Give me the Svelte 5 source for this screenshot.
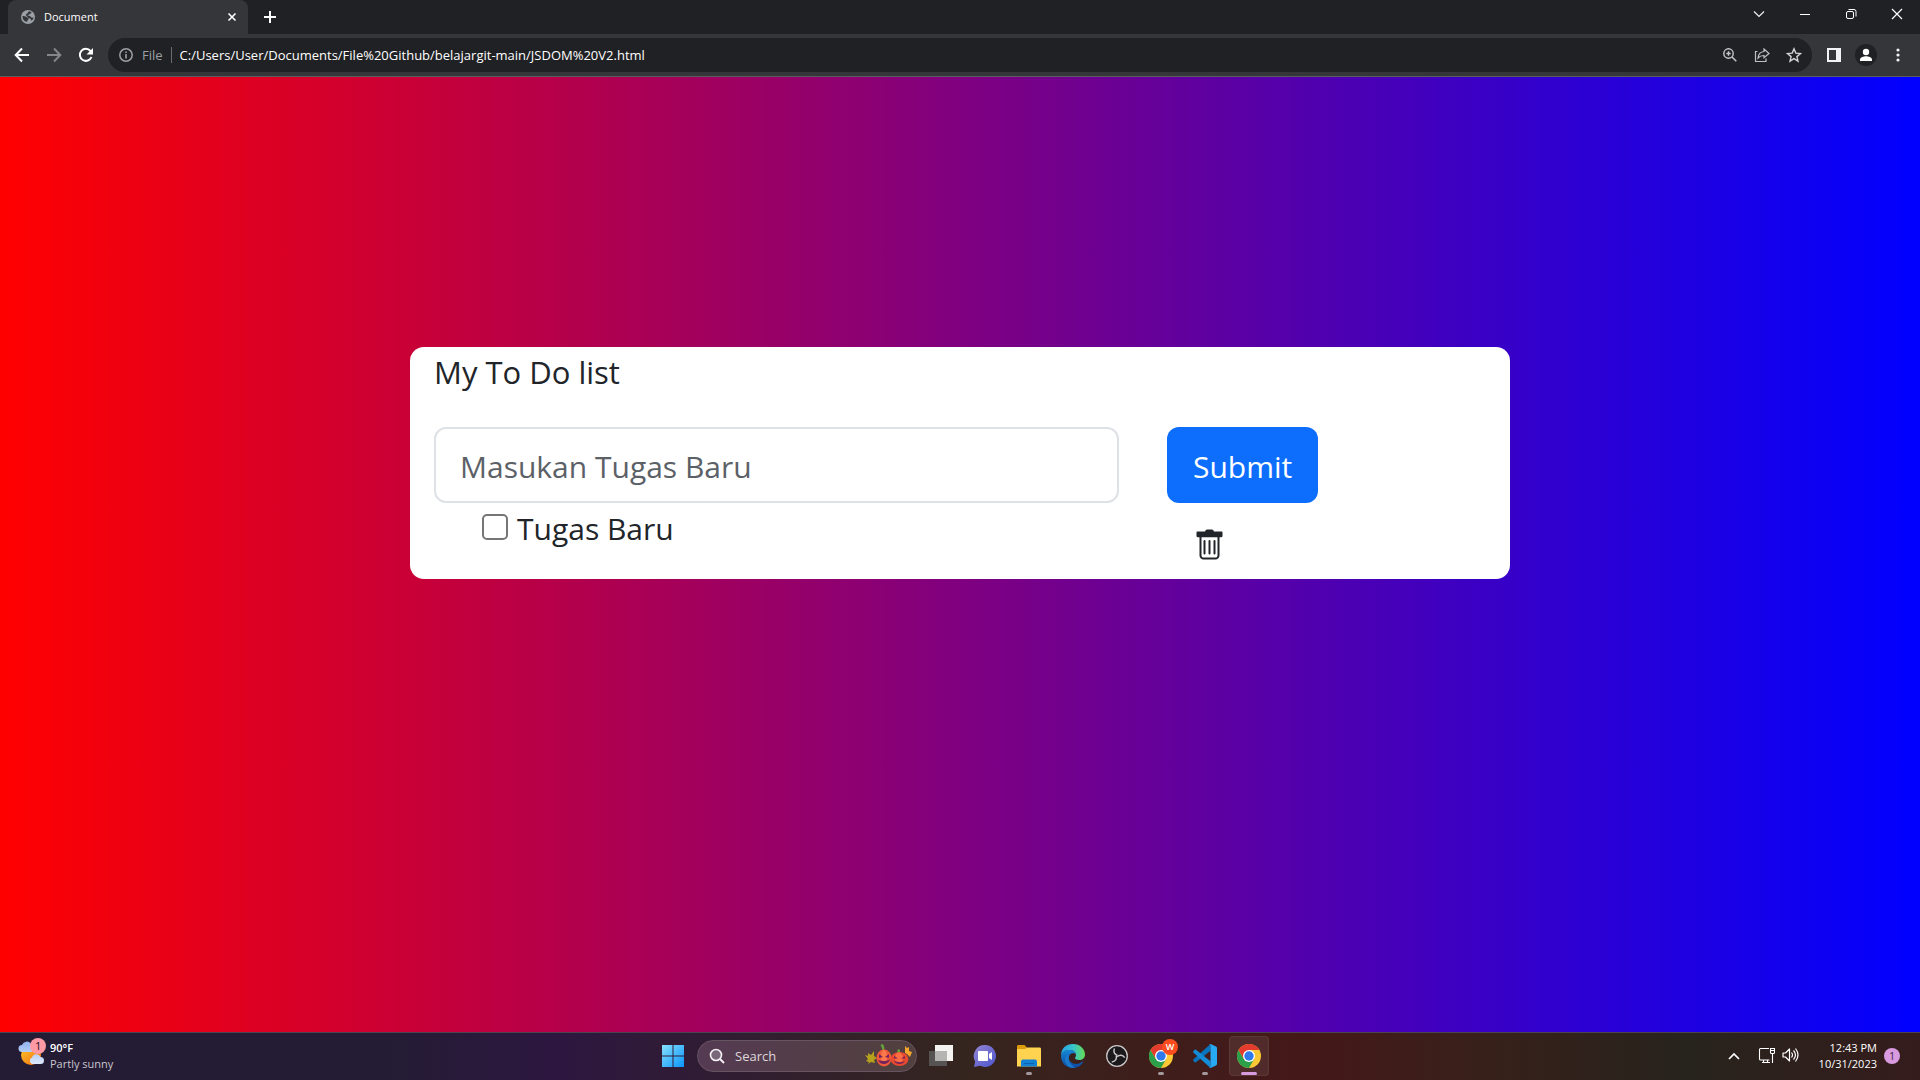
<script>
  let task = $state('');
  let done = $state(false);
</script>

<div class="screen">
  <header class="browser">
    <div class="tabs">
      <div class="tab">
        <svg class="globe" viewBox="0 0 14 14" width="14" height="14"><circle cx="7" cy="7" r="7" fill="#9aa0a6"/><path d="M1.500 6c1.500 0 3 .2 4 1 .3 1 2.200.2 2.200 1.500 0 1-1.500 1.200-1.500 3.200C3.500 12 1.400 9.500 1.500 6zM7.500 1.500c1.500-.2 2.500.3 3.200 1-.5 1.300-1.700.9-2.200 1.800-.4.800-1.500.2-1.900 1 .3.700 2 .3 2.700 1 .5.800 1.300 1.600 2.700 1.300l.5-.3c-.1 1.800-.9 2.700-1.900 3.500-.5-1-1-2-2-2.500-1.500-.5-2.500-1.500-3.600-3-.6-1.300 1-1.600 1.800-2.300z" fill="#35363a"/></svg>
        <span class="tabname">Document</span>
        <button class="icon small" aria-label="Close tab"><svg viewBox="0 0 10 10" width="10" height="10"><path d="M1.500 1.500l7 7m0-7l-7 7" stroke="#fff" stroke-width="1.600"/></svg></button>
      </div>
      <button class="icon plus" aria-label="New tab"><svg viewBox="0 0 12 12" width="12" height="12"><path d="M6 0v12M0 6h12" stroke="#fff" stroke-width="2"/></svg></button>
      <div class="window">
        <button class="icon" aria-label="Search tabs"><svg viewBox="0 0 12 12" width="12" height="12"><path d="M1 3.500l5 5 5-5" fill="none" stroke="#f0f1f2" stroke-width="1.200"/></svg></button>
        <button class="icon" aria-label="Minimize"><svg viewBox="0 0 12 12" width="12" height="12"><path d="M1 6.500h10" stroke="#fff"/></svg></button>
        <button class="icon" aria-label="Restore"><svg viewBox="0 0 12 12" width="12" height="12"><rect x="1.500" y="3.500" width="7" height="7" rx="1.500" fill="none" stroke="#fff"/><path d="M3.500 1.500h5.500a2 2 0 0 1 2 2v5" fill="none" stroke="#fff"/></svg></button>
        <button class="icon" aria-label="Close"><svg viewBox="0 0 12 12" width="12" height="12"><path d="M1 1l10 10m0-10L1 11" stroke="#fff" stroke-width="1.200"/></svg></button>
      </div>
    </div>
    <nav class="toolbar">
      <button class="icon nav" aria-label="Back"><svg viewBox="0 0 16 16" width="16" height="16"><path d="M15 8H2m6-6.500L1.700 8 8 14.500" fill="none" stroke="#fff" stroke-width="2"/></svg></button>
      <button class="icon nav" aria-label="Forward"><svg viewBox="0 0 16 16" width="16" height="16"><path d="M1 8h13M8 1.500L14.300 8 8 14.500" fill="none" stroke="#84868a" stroke-width="2"/></svg></button>
      <button class="icon nav" aria-label="Reload"><svg viewBox="0 0 16 16" width="16" height="16"><path d="M13.500 10A6 6 0 1 1 12.500 4l1 1" fill="none" stroke="#fff" stroke-width="2"/><path d="M15 1v6.500H8.500z" fill="#fff"/></svg></button>
      <div class="omnibox">
        <svg viewBox="0 0 14 14" width="14" height="14"><circle cx="7" cy="7" r="6.200" fill="none" stroke="#9aa0a6" stroke-width="1.500"/><path d="M7 6v4.500M7 3.500V5" stroke="#9aa0a6" stroke-width="1.600"/></svg>
        <span class="file">File</span>
        <input class="url" aria-label="Address" value="C:/Users/User/Documents/File%20Github/belajargit-main/JSDOM%20V2.html" />
        <button class="icon" aria-label="Zoom"><svg viewBox="0 0 14 14" width="14" height="14"><circle cx="5.500" cy="5.500" r="4.700" fill="none" stroke="#c4c7ca" stroke-width="1.400"/><path d="M9 9l4.300 4.300M5.500 3.300v4.400M3.300 5.500h4.400" stroke="#c4c7ca" stroke-width="1.500"/></svg></button>
        <button class="icon" aria-label="Share"><svg viewBox="0 0 16 16" width="16" height="16"><path d="M3.500 4.500h-2v10h10.500v-3" fill="none" stroke="#bdc1c6" stroke-width="1.200"/><path d="M10 2l5 4.500-5 4.300V8.500C7.500 8.500 5.500 9.200 4 11c.3-3.500 2.500-6.200 6-6.500z" fill="none" stroke="#bdc1c6" stroke-width="1.200"/></svg></button>
        <button class="icon" aria-label="Bookmark"><svg viewBox="0 0 16 16" width="16" height="16"><path d="M8 1.800l1.800 4.300 4.700.4-3.600 3.100 1.100 4.600L8 11.700l-4 2.500 1.100-4.600-3.600-3.100 4.700-.4z" fill="none" stroke="#d0d3d6" stroke-width="1.400"/></svg></button>
      </div>
      <div class="actions">
        <button class="icon" aria-label="Side panel"><svg viewBox="0 0 14 14" width="14" height="14"><path fill-rule="evenodd" d="M0 0h14v14H0zM2 2v10h7V2z" fill="#f1f3f4"/></svg></button>
        <button class="icon" aria-label="Profile"><svg viewBox="0 0 22 22" width="22" height="22"><circle cx="11" cy="11" r="11" fill="#202124"/><circle cx="11" cy="8" r="3.200" fill="#fff"/><path d="M5 17v-1.500c0-2.200 3.800-3.300 6-3.300s6 1.100 6 3.300V17z" fill="#fff"/></svg></button>
        <button class="icon more" aria-label="Menu"><svg viewBox="0 0 4 14" width="4" height="14"><circle cx="2" cy="2" r="1.600" fill="#f1f3f4"/><circle cx="2" cy="7" r="1.600" fill="#f1f3f4"/><circle cx="2" cy="12" r="1.600" fill="#f1f3f4"/></svg></button>
      </div>
    </nav>
  </header>

  <main class="page">
    <section class="card">
      <h1>My To Do list</h1>
      <form class="entry" onsubmit={(e) => e.preventDefault()}>
        <input class="task" aria-label="Masukan Tugas Baru" placeholder="Masukan Tugas Baru" bind:value={task} />
        <button class="submit">Submit</button>
      </form>
      <div class="item">
        <label><input type="checkbox" bind:checked={done} />Tugas Baru</label>
        <button class="icon trash" aria-label="Delete">
          <svg viewBox="0 0 27 31" width="27" height="31"><path d="M1.500 2.500H9c.5-1.600 1.500-2 2.500-2h4c1 0 2 .4 2.500 2h7.500c.700 0 1 .5 1 1v3.500c0 .7-.5 1.200-1.200 1.200H1.700C1 8.200.5 7.700.5 7V3.500c0-.5.3-1 1-1z" fill="#212529"/><path d="M4.500 8v18.500a3 3 0 0 0 3 3h12a3 3 0 0 0 3-3V8M8.500 12v12.500M13.500 12v12.500M18.500 12v12.500" fill="none" stroke="#212529" stroke-width="2" stroke-linecap="round"/></svg>
        </button>
      </div>
    </section>
  </main>

  <footer class="taskbar">
    <button class="weather">
      <svg viewBox="0 0 28 28" width="28" height="28"><defs><linearGradient id="sun" x2="1" y2="1"><stop stop-color="#ffc928"/><stop offset="1" stop-color="#f26b12"/></linearGradient><linearGradient id="cloud" x2="0" y2="1"><stop stop-color="#8fb3ef"/><stop offset="1" stop-color="#dce9fb"/></linearGradient></defs><circle cx="13" cy="17" r="10" fill="url(#sun)"/><path d="M4 14a3.500 3.500 0 0 1 0-7 5 5 0 0 1 9-1l1 8zM14 26a3.500 3.500 0 0 1 0-6.500 4.500 4.500 0 0 1 8.500-.5 3.500 3.500 0 0 1 0 7z" fill="url(#cloud)"/><circle cx="20" cy="8" r="8" fill="#ff99a4"/><text x="17" y="12" font-size="11" fill="#201020">1</text></svg>
      <span class="two"><strong>90°F</strong><span>Partly sunny</span></span>
    </button>
    <div class="apps">
      <button class="app" aria-label="Start"><svg viewBox="0 0 24 24" width="24" height="24"><defs><linearGradient id="win" x2="1" y2="1"><stop stop-color="#86e0ff"/><stop offset="1" stop-color="#0a94fa"/></linearGradient></defs><path d="M1 1h10.500v10.500H1zM12.500 1H23v10.500H12.500zM1 12.500h10.500V23H1zM12.500 12.500H23V23H12.500z" fill="url(#win)"/></svg></button>
      <button class="search">
        <svg viewBox="0 0 16 16" width="16" height="16"><circle cx="7" cy="7" r="5.500" fill="#79687a" stroke="#f4f0f4" stroke-width="1.600"/><path d="M11 11l4 4" stroke="#f4f0f4" stroke-width="2"/></svg>
        <span>Search</span>
        <svg viewBox="0 0 48 24" width="48" height="24"><path d="M1 11l3 1 0-3 3 2 3-4 0 5 3 2-3 2 1 3-4-1-3 2 1-2-3-1 2-2z" fill="#b5a21c"/><path d="M18.500 7c0-3-1-4-2-6l2-1c2 2 2 4 2 7zM33 9l1-4 2 1v4z" fill="#66a63a"/><ellipse cx="20" cy="14" rx="7.500" ry="8.500" fill="#ee5a3a"/><ellipse cx="20" cy="13" rx="3" ry="7" fill="#fb7a4c"/><ellipse cx="35.500" cy="15" rx="9" ry="7" fill="#e84a30"/><ellipse cx="35" cy="14" rx="4" ry="5.500" fill="#fb6d43"/><path d="M15 10l4 3-4 1zM25 10l-4 3 4 1zM14 16c4 1.500 9 1.500 12-1-1 6-10 7-12 1zM30 12l4 2.500h-4zM41 12l-4 2.500h4zM30 17c4 1.500 8 1.500 11 0-2 4-9 4-11 0z" fill="#75245c"/><path d="M41 2l2 2 2-1 0 4 3 1-2 5-3-3-2-1z" fill="#f6a72b"/></svg>
      </button>
      <button class="app" aria-label="Task view"><svg viewBox="0 0 24 24" width="24" height="24"><path d="M6 1h18v16H6z" fill="#f4f3f2"/><path d="M0 7h18v15H0z" fill="#555452"/><path d="M6 7h12v10H6z" fill="#b5b4b3"/></svg></button>
      <button class="app" aria-label="Chat"><svg viewBox="0 0 24 24" width="24" height="24"><defs><linearGradient id="chat" x2="1" y2="1"><stop stop-color="#9587d3"/><stop offset="1" stop-color="#4b53ce"/></linearGradient></defs><path d="M12 1a11 11 0 1 1-5 20.800L1 23l1.200-5.500A11 11 0 0 1 12 1z" fill="url(#chat)"/><rect x="5" y="7" width="10" height="10" rx="1" fill="#fff"/><path d="M16 10l3-2v8l-3-2z" fill="#fff"/></svg></button>
      <button class="app open" aria-label="File Explorer"><svg viewBox="0 0 24 24" width="24" height="24"><path d="M0 2.500C0 1.500.5 1 1.500 1h6L10 3.500V8H0z" fill="#dc9b0a"/><path d="M0 5h8l2-1.500h12.500c1 0 1.500.5 1.500 1.500v17.500H0z" fill="#ffd350"/><path d="M4 22.500V18c0-1.500.5-2.500 2-2.500h12c1.500 0 2 1 2 2.500v4.500z" fill="#1180d5"/><path d="M7 19.500h10" stroke="#0a62ae"/></svg></button>
      <button class="app" aria-label="Edge"><svg viewBox="0 0 24 24" width="24" height="24"><defs><linearGradient id="edgeTop" x2="1"><stop stop-color="#279fe0"/><stop offset=".5" stop-color="#36c5cf"/><stop offset="1" stop-color="#65db53"/></linearGradient><linearGradient id="edgeLow" x2="0" y2="1"><stop stop-color="#1688d8"/><stop offset="1" stop-color="#0c479e"/></linearGradient></defs><path d="M0 12C0 4 5 0 12 0s12 5 12 10.500c0 4-3 5.500-5.500 5.500-3 0-4.500-1-4.500-2s1-1 1-3c0-3-3-5-6.500-5C4 6 1 8.500 0 12z" fill="url(#edgeTop)"/><path d="M0 12c1-5 5-6 8-6 4 0 7 2 7 5 0-2-5-2.500-6.500 0-2.500 4.500 1.500 9 6.500 9 3 0 5-1.500 6.500-2.500.5 0 .7.300.4.700C20 21.500 16.500 24 12 24 5 24 0 19 0 12z" fill="url(#edgeLow)"/><path d="M8.500 11c-2.500 4.500 1 11 6 12.500C8 25 3 20 4 14.500 4.500 12 6.500 10.500 8.500 11z" fill="#1c78cb"/></svg></button>
      <button class="app" aria-label="OBS"><svg viewBox="0 0 24 24" width="24" height="24"><circle cx="12" cy="12" r="10.300" fill="#1b191b" stroke="#cbc8c9" stroke-width="1.300"/><g fill="none" stroke="#cbc8c9" stroke-width="1.500"><path d="M12.500 11.500C9.500 10.500 8 8 9.500 4.500"/><path d="M12.500 11.500C9.500 10.500 8 8 9.500 4.500" transform="rotate(120 12 12)"/><path d="M12.500 11.500C9.500 10.500 8 8 9.500 4.500" transform="rotate(240 12 12)"/></g></svg></button>
      {#each ['work', 'code', 'active'] as app}
        <button class="app open" class:active={app === 'active'} aria-label={app === 'code' ? 'Visual Studio Code' : 'Chrome'}>
          {#if app === 'code'}
            <svg viewBox="0 0 24 24" width="24" height="24"><path d="M17.500 0v6.800L3 18.300c-.5.300-1 .2-1.300-.1L.3 16.800c-.4-.4-.4-.9 0-1.300z" fill="#0874bd"/><path d="M17.500 24v-6.800L3 5.700c-.5-.3-1-.2-1.300.1L.3 7.200c-.4.400-.4.900 0 1.300z" fill="#148bd6"/><path d="M17.500 0L23 2.500c.7.300 1 .9 1 1.500v16c0 .6-.3 1.200-1 1.500L17.500 24c-.7 0-1-.4-1.500-1 .9.500 1.500 0 1.500-.8V1.800c0-.8-.6-1.300-1.500-.8.500-.6.800-1 1.500-1z" fill="#29a8f2"/></svg>
          {:else}
            <svg viewBox="0 0 24 24" width="24" height="24"><circle cx="12" cy="12" r="12" fill="#fcc934"/><path d="M1.600 6A12 12 0 0 0 12 24l5.200-9H6.800z" fill="#2b9f49"/><path d="M12 6h10.400A12 12 0 0 0 1.600 6l5.200 9z" fill="#e33b2e"/><circle cx="12" cy="12" r="6" fill="#fff"/><circle cx="12" cy="12" r="4.700" fill="#3079ec"/></svg>
          {/if}
          {#if app === 'work'}<span class="badge">W</span>{/if}
        </button>
      {/each}
    </div>
    <div class="tray">
      <button class="icon" aria-label="Hidden icons"><svg viewBox="0 0 12 8" width="12" height="8"><path d="M1 7l5-5 5 5" fill="none" stroke="#fff" stroke-width="1.700"/></svg></button>
      <button class="quick" aria-label="Network and volume">
        <svg viewBox="0 0 17 17" width="17" height="17"><path d="M11 1.500H2.500a1 1 0 0 0-1 1v9.500a1 1 0 0 0 1 1h9M4 15.500h8M5.500 13v2.500M9.500 13v2.500M14.500 7v9M12.500 1.500h4v4a1 1 0 0 1-1 1h-2a1 1 0 0 1-1-1zM12.500 3.500h4" fill="none" stroke="#fff" stroke-width="1.100"/></svg>
        <svg viewBox="0 0 17 16" width="17" height="16"><path d="M1 6h2.500L7.500 2v12l-4-4H1zM9.500 5.500q2 2.500 0 5M11.500 3.500q4 4.500 0 9M13.500 1.500q5 6.500 0 13" fill="none" stroke="#fff" stroke-width="1.200" stroke-linejoin="round"/></svg>
      </button>
      <button class="clock two"><span>12:43 PM</span><span>10/31/2023</span></button>
      <span class="count">1</span>
    </div>
  </footer>
</div>

<style>
  :global(body) { margin: 0; font-family: "Open Sans", "Noto Sans", sans-serif; }
  * { box-sizing: border-box; }
  svg { display: block; flex: none; }
  button { border: 0; background: none; padding: 0; margin: 0; font: inherit; color: inherit; }
  .screen { min-height: 100vh; display: flex; flex-direction: column; }
  .icon { display: flex; align-items: center; justify-content: center; }
  .browser { background: #35363a; border-bottom: 1px solid #5b5c60; color: #fff; font-size: 13px; }
  .tabs { height: 34px; display: flex; align-items: stretch; background: #202124; padding-left: 8px; }
  .tab { width: 240px; display: flex; align-items: center; gap: 9px; padding: 0 11px 0 13px; background: #35363a; border-radius: 8px 8px 0 0; }
  .tabname { flex: 1; font-size: 11px; font-weight: 500; padding-bottom: 2px; }
  .plus { width: 44px; }
  .window { margin-left: auto; display: flex; align-items: flex-start; padding-top: 8px; }
  .window .icon { width: 46px; }
  .toolbar { height: 42px; display: flex; align-items: center; padding: 0 8px 0 6px; }
  .nav { width: 32px; height: 32px; }
  .omnibox { flex: 1; height: 34px; margin-left: 6px; display: flex; align-items: center; background: #202124; border-radius: 17px; padding: 0 2px 0 11px; }
  .omnibox .icon { width: 32px; }
  .file { margin-left: 9px; padding-right: 8px; border-right: 1px solid #6a6c70; color: #9aa0a6; line-height: 16px; }
  .url { flex: 1; min-width: 0; border: 0; outline: 0; background: none; color: #fff; font: inherit; padding: 0 8px; }
  .actions { display: flex; align-items: center; gap: 14px; padding: 0 7px 0 15px; }
  .more { width: 14px; }

  .page { flex: 1; padding: 270px 24px 0; background: linear-gradient(to right, #f00, #00f); color: #212529; }
  .card { width: 100%; max-width: 1100px; margin: 0 auto; background: #fff; border-radius: 14px; padding: 0 24px 16px; font-size: 30px; }
  h1 { margin: 0; padding: 1px 0 31px; font-size: 31px; font-weight: 400; line-height: 48px; }
  .entry { display: grid; grid-template-columns: 1fr 319px; gap: 48px; }
  .task { min-width: 0; height: 76px; border: 2px solid #dee2e6; border-radius: 12px; padding: 2px 24px 0; font: inherit; color: #212529; }
  .task::placeholder { color: #5c6167; opacity: 1; }
  .submit { justify-self: start; height: 76px; border-radius: 12px; background: #0d6efd; color: #fff; padding: 2px 26px 0; }
  .item { display: flex; justify-content: space-between; align-items: flex-start; padding: 2px 263px 0 48px; height: 60px; }
  .item label { display: flex; align-items: flex-start; gap: 9px; line-height: 48px; }
  .item input { appearance: none; width: 26px; height: 26px; margin: 9px 0 0; border: 2px solid #767676; border-radius: 5px; background: #fff; }
  .item input:checked { background: #0d6efd; border-color: #0d6efd; }
  .trash { padding-top: 24px; }

  .taskbar { height: 48px; display: grid; grid-template-columns: 1fr auto 1fr; align-items: center; padding-bottom: 2px; border-top: 1px solid #4b4450; background: linear-gradient(90deg, #241c34 20%, #2d1740 29%, #35251f 50%, #451818 68%, #38201a 77%, #27231d 88%, #351c1c); color: #fff; font-size: 11px; }
  .weather { display: flex; gap: 4px; align-items: center; padding-left: 18px; text-align: left; justify-self: start; }
  .weather svg { margin-bottom: 8px; }
  .two { display: flex; flex-direction: column; line-height: 16px; }
  .weather strong { font-weight: 600; }
  .weather .two > span { color: #c9c5cd; }
  .apps { display: flex; align-items: center; gap: 4px; padding-left: 2px; }
  .app { width: 40px; height: 40px; display: flex; align-items: center; justify-content: center; position: relative; border-radius: 4px; }
  .open::after { content: ""; position: absolute; bottom: 1px; width: 6px; height: 3px; border-radius: 2px; background: #a3999b; }
  .active { background: #ffffff14; box-shadow: inset 0 0 0 1px #ffffff10; }
  .active::after { width: 16px; background: #d99ae0; }
  .badge { position: absolute; top: 3px; right: 3px; width: 16px; height: 16px; border-radius: 50%; background: #fa4c1e; font-size: 9px; line-height: 16px; font-weight: 600; }
  .search { width: 220px; height: 32px; border-radius: 16px; display: flex; align-items: center; gap: 10px; padding: 0 4px 0 11px; background: linear-gradient(90deg, #553b53, #51403e); border: 1px solid #675461; font-size: 13px; color: #ded7dc; }
  .search span { flex: 1; text-align: left; }
  .tray { display: flex; align-items: center; justify-self: end; padding-right: 20px; }
  .quick { display: flex; gap: 7px; padding: 0 18px; }
  .clock { text-align: right; padding-left: 2px; }
  .count { width: 16px; height: 16px; margin-left: 7px; border-radius: 50%; background: #d99ae0; color: #33203a; font-size: 10px; line-height: 16px; text-align: center; }
</style>
